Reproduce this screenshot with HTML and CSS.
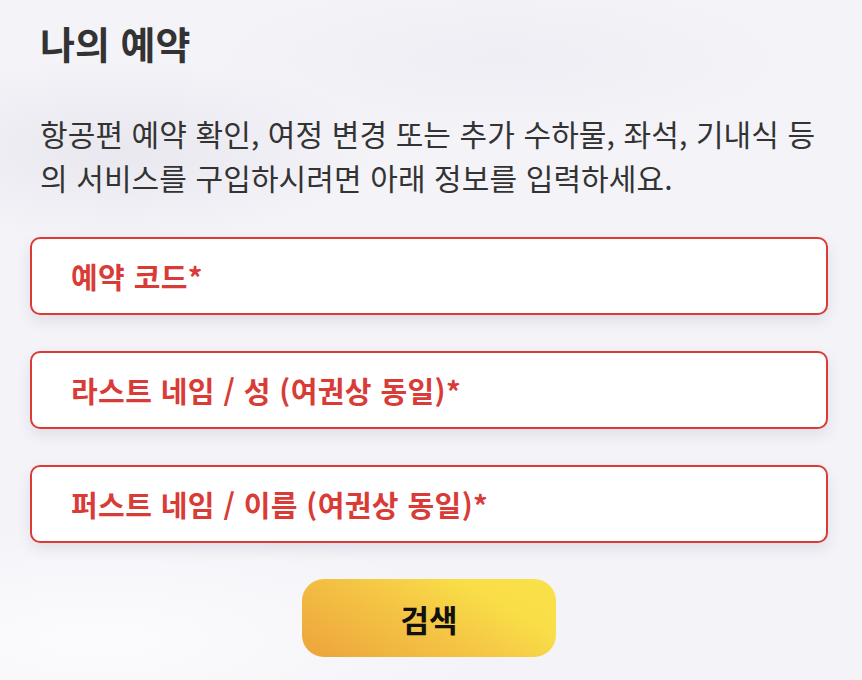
FILE: index.html
```html
<!DOCTYPE html>
<html lang="ko">
<head>
<meta charset="utf-8">
<title>나의 예약</title>
<link rel="stylesheet" href="styles.css">
</head>
<body>
<main class="page">
  <h1 class="title">나의 예약</h1>
  <p class="intro">항공편 예약 확인, 여정 변경 또는 추가 수하물, 좌석, 기내식 등의 서비스를 구입하시려면 아래 정보를 입력하세요.</p>
  <form class="form">
    <label class="field"><span class="label">예약 코드*</span></label>
    <label class="field"><span class="label">라스트 네임 / 성 (여권상 동일)*</span></label>
    <label class="field"><span class="label">퍼스트 네임 / 이름 (여권상 동일)*</span></label>
    <div class="actions">
      <button type="button" class="search">검색</button>
    </div>
  </form>
</main>
</body>
</html>
```
FILE: styles.css
```css
html, body {
  margin: 0;
  padding: 0;
}
body {
  width: 862px;
  height: 680px;
  overflow: hidden;
  font-family: "Noto Sans CJK KR", "Noto Sans", sans-serif;
  background:
    radial-gradient(ellipse 260px 90px at 120px 150px, rgba(225,222,232,0.55), rgba(225,222,232,0) 100%),
    radial-gradient(ellipse 300px 80px at 500px 60px, rgba(235,233,240,0.5), rgba(235,233,240,0) 100%),
    radial-gradient(ellipse 400px 120px at 100px 640px, rgba(255,255,255,0.7), rgba(255,255,255,0) 100%),
    #f4f3f8;
}
.page {
  padding: 17px 0 0 30px;
  width: 798px;
}
.title {
  margin: 0 0 0 10px;
  font-size: 38px;
  line-height: 52px;
  font-weight: 700;
  color: #333333;
}
.intro {
  margin: 42px 0 0 10px;
  width: 790px;
  font-size: 30px;
  line-height: 44px;
  letter-spacing: 0.1px;
  color: #333333;
}
.form {
  margin-top: 38px;
  display: flex;
  flex-direction: column;
  gap: 36px;
}
.field {
  display: flex;
  align-items: center;
  height: 74px;
  border: 2px solid #dc3a35;
  border-radius: 10px;
  background: #ffffff;
  box-shadow: 0 6px 14px rgba(60, 50, 90, 0.10);
  padding: 0 0 0 39px;
}
.label {
  font-size: 29px;
  font-weight: 700;
  color: #d93b36;
  letter-spacing: 0.4px;
}
.actions {
  display: flex;
  justify-content: center;
}
.search {
  width: 254px;
  height: 78px;
  border: none;
  border-radius: 22px;
  background: linear-gradient(30deg, #eda33c 0%, #f4c444 45%, #f9de48 75%, #fae049 100%);
  font-family: "Noto Sans CJK KR", sans-serif;
  font-size: 31px;
  font-weight: 700;
  color: #111111;
}
```
